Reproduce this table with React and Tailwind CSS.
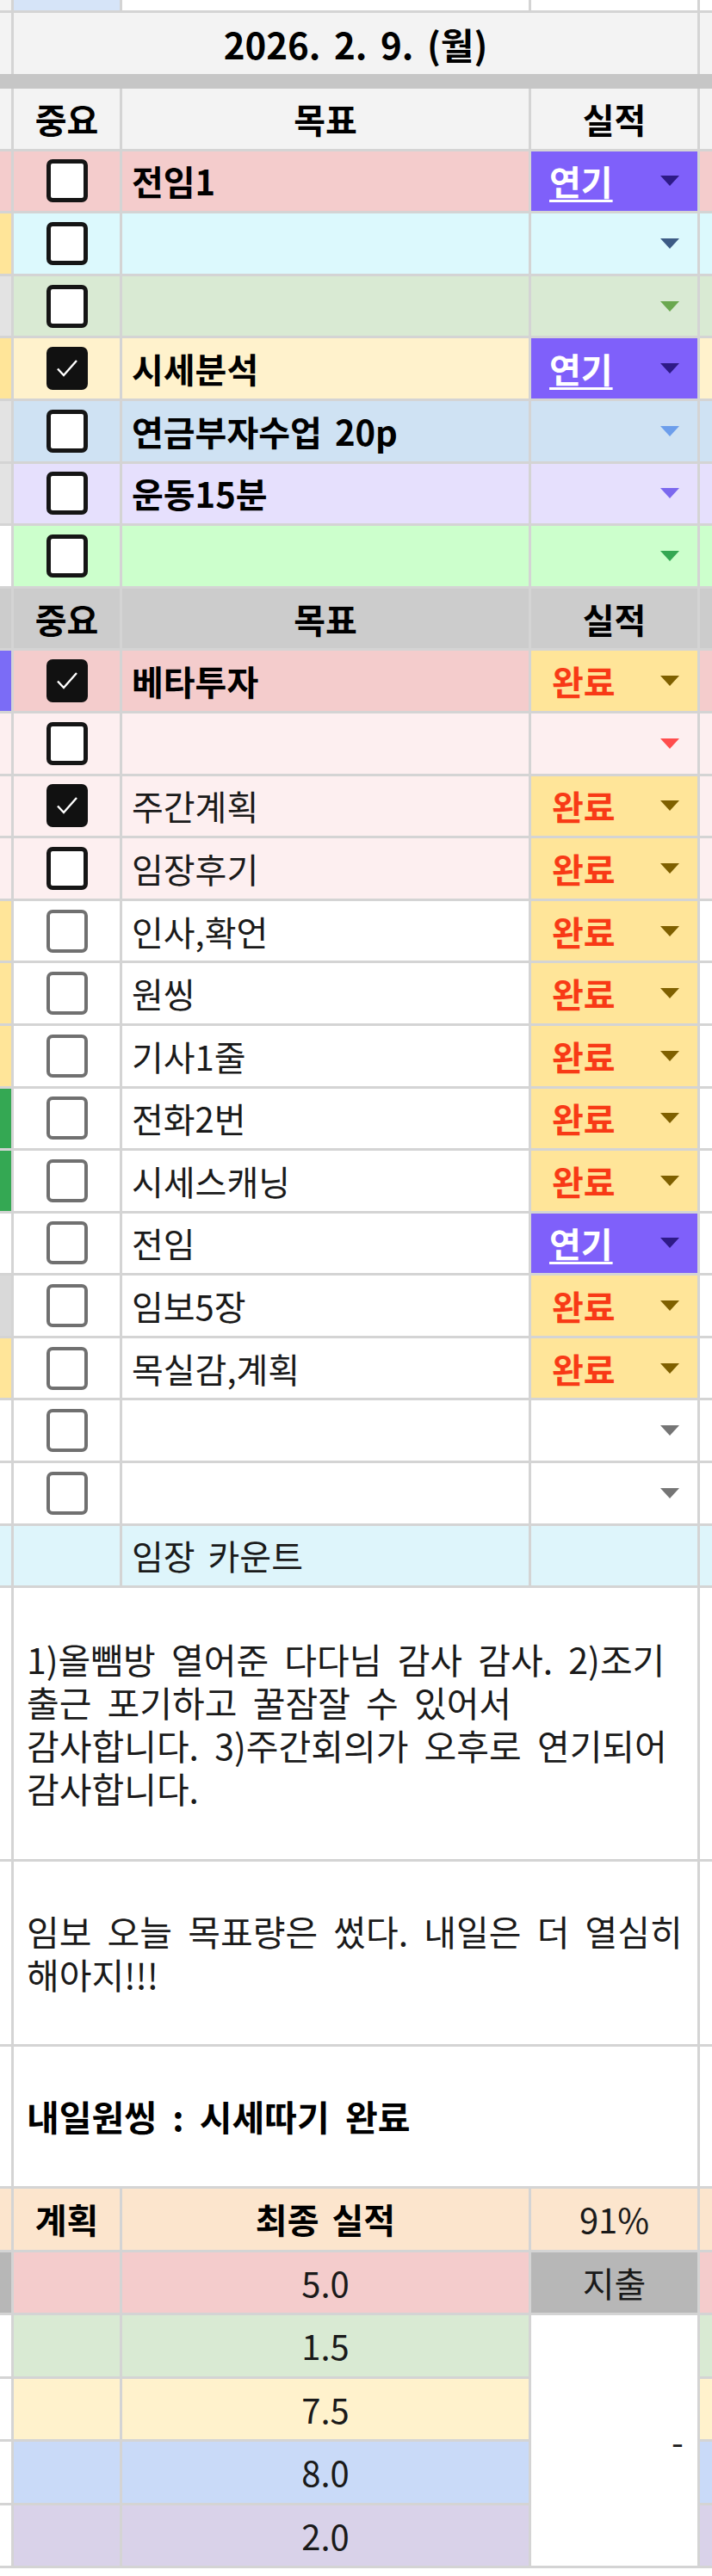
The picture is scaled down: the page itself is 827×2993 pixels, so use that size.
import React from 'react'

const GRID = 'grid grid-cols-[13px_123px_472px_193px_14px] gap-x-[3px]'

const upper = [
  { mark: 'bg-[#f4cccc]', bg: 'bg-[#f4cccc]', check: false, text: '전임1', status: '연기' },
  { mark: 'bg-[#ffe599]', bg: 'bg-[#dcf9fd]', check: false, text: '', arrow: '#3d5b85' },
  { mark: 'bg-[#e3e3e3]', bg: 'bg-[#d9ead3]', check: false, text: '', arrow: '#6aa84f' },
  { mark: 'bg-[#ffe599]', bg: 'bg-[#fff2cc]', check: true, text: '시세분석', status: '연기' },
  { mark: 'bg-[#e3e3e3]', bg: 'bg-[#cfe2f3]', check: false, text: '연금부자수업 20p', arrow: '#6d9eeb' },
  { mark: 'bg-[#e3e3e3]', bg: 'bg-[#e6e0fd]', check: false, text: '운동15분', arrow: '#7b68ee' },
  { mark: 'bg-white', bg: 'bg-[#ccffcc]', check: false, text: '', arrow: '#34a853' },
]

const lower = [
  { mark: 'bg-[#7b6cf6]', bg: 'bg-[#f4cccc]', check: true, text: '베타투자', bold: true, dark: true, status: '완료' },
  { mark: 'bg-[#fdeff0]', bg: 'bg-[#fdeff0]', check: false, text: '', dark: true, arrow: '#ff4d4d' },
  { mark: 'bg-[#fdeff0]', bg: 'bg-[#fdeff0]', check: true, text: '주간계획', dark: true, status: '완료' },
  { mark: 'bg-[#fdeff0]', bg: 'bg-[#fdeff0]', check: false, text: '임장후기', dark: true, status: '완료' },
  { mark: 'bg-[#ffe599]', bg: 'bg-white', check: false, text: '인사,확언', status: '완료' },
  { mark: 'bg-[#ffe599]', bg: 'bg-white', check: false, text: '원씽', status: '완료' },
  { mark: 'bg-[#ffe599]', bg: 'bg-white', check: false, text: '기사1줄', status: '완료' },
  { mark: 'bg-[#34a853]', bg: 'bg-white', check: false, text: '전화2번', status: '완료' },
  { mark: 'bg-[#34a853]', bg: 'bg-white', check: false, text: '시세스캐닝', status: '완료' },
  { mark: 'bg-white', bg: 'bg-white', check: false, text: '전임', status: '연기' },
  { mark: 'bg-[#d9d9d9]', bg: 'bg-white', check: false, text: '임보5장', status: '완료' },
  { mark: 'bg-[#ffe599]', bg: 'bg-white', check: false, text: '목실감,계획', status: '완료' },
  { mark: 'bg-white', bg: 'bg-white', check: false, text: '', arrow: '#757575' },
  { mark: 'bg-white', bg: 'bg-white', check: false, text: '', arrow: '#757575' },
]

function Arrow({ color }) {
  return (
    <svg width="26" height="14" viewBox="0 0 26 14" className="shrink-0">
      <path d="M2 1h22L13 13z" fill={color} />
    </svg>
  )
}

function Box({ checked, dark }) {
  if (checked) {
    return (
      <div className="w-[48px] h-[50px] rounded-[7px] bg-[#111] flex items-center justify-center">
        <svg width="32" height="32" viewBox="0 0 32 32">
          <path d="M5 16.5l7 7.5L27 7" fill="none" stroke="white" strokeWidth="2.4" />
        </svg>
      </div>
    )
  }
  return (
    <div
      className={
        dark
          ? 'w-[48px] h-[50px] rounded-[7px] border-[5px] border-[#151515] bg-white'
          : 'w-[48px] h-[50px] rounded-[7px] border-[4px] border-[#707070] bg-white'
      }
    />
  )
}

function Status({ row }) {
  if (row.status === '연기') {
    return (
      <div className="bg-[#7f60fa] flex items-center justify-between pl-[21px] pr-[19px]">
        <span className="text-white font-bold underline decoration-[3px] underline-offset-[5px]">연기</span>
        <Arrow color="#2e1a87" />
      </div>
    )
  }
  if (row.status === '완료') {
    return (
      <div className="bg-[#ffe599] flex items-center justify-between pl-[24px] pr-[19px]">
        <span className="text-[#f83a16] font-bold">완료</span>
        <Arrow color="#7f6000" />
      </div>
    )
  }
  return (
    <div className={`${row.bg} flex items-center justify-end pr-[19px]`}>
      <Arrow color={row.arrow} />
    </div>
  )
}

function TaskRow({ row, bold, dark }) {
  return (
    <div className={`${GRID} h-[69.6px]`}>
      <div className={row.mark} />
      <div className={`${row.bg} flex items-center justify-center`}>
        <Box checked={row.check} dark={dark || row.dark} />
      </div>
      <div className={`${row.bg} flex items-center pl-[11px] whitespace-nowrap ${bold || row.bold ? 'font-bold text-black' : 'text-[#1a1a1a]'}`}>
        {row.text}
      </div>
      <Status row={row} />
      <div className={row.bg} />
    </div>
  )
}

function Header({ bg }) {
  return (
    <div className={`${GRID} h-[69.6px] font-bold text-black`}>
      <div className={bg} />
      <div className={`${bg} flex items-center justify-center`}>중요</div>
      <div className={`${bg} flex items-center justify-center`}>목표</div>
      <div className={`${bg} flex items-center justify-center`}>실적</div>
      <div className={bg} />
    </div>
  )
}

function Note({ h, lines, bold }) {
  return (
    <div className={`${GRID} ${h}`}>
      <div className="bg-white" />
      <div className="col-span-3 bg-white flex flex-col justify-center pl-[15px] text-[41px] [word-spacing:9px]">
        {lines.map((line) => (
          <div
            key={line}
            className={`h-[50px] flex items-center whitespace-nowrap ${bold ? 'font-bold text-black' : 'text-[#1a1a1a]'}`}
          >
            {line}
          </div>
        ))}
      </div>
      <div className="bg-white" />
    </div>
  )
}

const totals = [
  { bg: 'bg-[#d9ead3]', value: '1.5' },
  { bg: 'bg-[#fff2cc]', value: '7.5' },
  { bg: 'bg-[#c9daf8]', value: '8.0' },
  { bg: 'bg-[#d9d2e9]', value: '2.0' },
]

export default function App() {
  return (
    <div className="w-[827px] min-h-[2993px] bg-white flex flex-col font-['Noto_Sans_CJK_KR','Noto_Sans',sans-serif] text-[40px] leading-none [word-spacing:6px]">
      <div className="flex flex-col gap-y-[3px] bg-[#d4d4d4]">
        <div className={`${GRID} h-[12px]`}>
          <div className="bg-[#f3f3f3]" />
          <div className="bg-[#d6e4f8]" />
          <div className="bg-white" />
          <div className="bg-white" />
          <div className="bg-white" />
        </div>
        <div className={`${GRID} h-[71px]`}>
          <div className="bg-[#f3f3f3]" />
          <div className="col-span-3 bg-[#f3f3f3] flex items-center justify-center font-bold text-[42px] text-black">
            2026. 2. 9. (월)
          </div>
          <div className="bg-[#f3f3f3]" />
        </div>
      </div>
      <div className="h-[17px] bg-[#c6c6c6]" />
      <div className="flex flex-col gap-y-[3px] bg-[#d4d4d4] pb-[3px]">
        <Header bg="bg-[#f3f3f3]" />
        {upper.map((row, i) => (
          <TaskRow key={'u' + i} row={row} bold dark />
        ))}
        <Header bg="bg-[#cccccc]" />
        {lower.map((row, i) => (
          <TaskRow key={'l' + i} row={row} />
        ))}
        <div className={`${GRID} h-[69.6px]`}>
          <div className="bg-[#def5fb]" />
          <div className="bg-[#def5fb]" />
          <div className="bg-[#def5fb] flex items-center pl-[11px] text-[#1a1a1a]">임장 카운트</div>
          <div className="bg-[#def5fb]" />
          <div className="bg-[#def5fb]" />
        </div>
        <Note
          h="h-[314.9px]"
          lines={[
            '1)올뺌방 열어준 다다님 감사 감사. 2)조기',
            '출근 포기하고 꿀잠잘 수 있어서',
            '감사합니다. 3)주간회의가 오후로 연기되어',
            '감사합니다.',
          ]}
        />
        <Note h="h-[211.4px]" lines={['임보 오늘 목표량은 썼다. 내일은 더 열심히', '해아지!!!']} />
        <Note h="h-[162.6px]" lines={['내일원씽 : 시세따기 완료']} bold />
        <div className="grid grid-cols-[13px_123px_472px_193px_14px] grid-rows-[repeat(6,70.5px)] gap-[3px]">
          <div className="bg-[#fce5cd]" />
          <div className="bg-[#fce5cd] flex items-center justify-center font-bold text-black">계획</div>
          <div className="bg-[#fce5cd] flex items-center justify-center font-bold text-black">최종 실적</div>
          <div className="bg-[#fce5cd] flex items-center justify-center text-[#1a1a1a]">91%</div>
          <div className="bg-[#fce5cd]" />

          <div className="bg-[#b7b7b7]" />
          <div className="bg-[#f4cccc]" />
          <div className="bg-[#f4cccc] flex items-center justify-center text-[#1a1a1a]">5.0</div>
          <div className="bg-[#b7b7b7] flex items-center justify-center text-[#1a1a1a]">지출</div>
          <div className="bg-[#f4cccc]" />

          <div className="col-start-4 row-start-3 row-span-4 bg-white flex items-center justify-end pr-[16px] text-[#1a1a1a]">
            -
          </div>
          {totals.map((t) => (
            <React.Fragment key={t.value}>
              <div className="bg-white" />
              <div className={t.bg} />
              <div className={`${t.bg} flex items-center justify-center text-[#1a1a1a]`}>{t.value}</div>
              <div className={`${t.bg} col-start-5`} />
            </React.Fragment>
          ))}
        </div>
      </div>
      <div className="flex-1 bg-white" />
    </div>
  )
}
